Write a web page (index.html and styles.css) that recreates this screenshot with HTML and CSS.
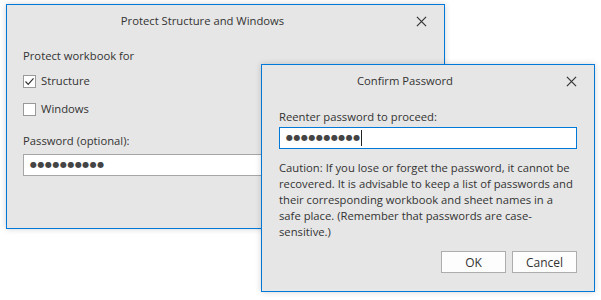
FILE: index.html
```html
<!DOCTYPE html>
<html lang="en">
<head>
    <meta charset="UTF-8">
    <title>Protect Structure and Windows</title>
    <link rel="stylesheet" href="styles.css">
</head>
<body>
    <div class="dialog protect">
        <div class="titlebar">
            <div class="title">Protect Structure and Windows</div>
            <div class="close">
                <svg width="12" height="12" viewBox="0 0 12 12"><path d="M1 1L11 11M11 1L1 11" stroke="#333" stroke-width="1.3" fill="none"/></svg>
            </div>
        </div>
        <div class="body">
            <div class="label">Protect workbook for</div>
            <div class="options">
                <div class="check-row">
                    <span class="checkbox">
                        <svg width="11" height="11" viewBox="0 0 11 11"><path d="M1.5 5.5L4.2 8.3L9.5 2.3" stroke="#333" stroke-width="1.2" fill="none"/></svg>
                    </span>
                    Structure
                </div>
                <div class="check-row">
                    <span class="checkbox"></span>
                    Windows
                </div>
            </div>
            <div class="label pw-label">Password (optional):</div>
            <div class="input"><span class="dots">●●●●●●●●●●</span></div>
        </div>
    </div>

    <div class="dialog confirm">
        <div class="titlebar">
            <div class="title">Confirm Password</div>
            <div class="close">
                <svg width="12" height="12" viewBox="0 0 12 12"><path d="M1 1L11 11M11 1L1 11" stroke="#333" stroke-width="1.3" fill="none"/></svg>
            </div>
        </div>
        <div class="body">
            <div class="label">Reenter password to proceed:</div>
            <div class="input focused"><span class="dots">●●●●●●●●●●</span><span class="caret"></span></div>
            <p class="caution">Caution: If you lose or forget the password, it cannot be recovered. It is advisable to keep a list of passwords and their corresponding workbook and sheet names in a safe place. (Remember that passwords are case-sensitive.)</p>
            <div class="buttons">
                <button class="btn">OK</button>
                <button class="btn">Cancel</button>
            </div>
        </div>
    </div>
</body>
</html>
```

FILE: styles.css
```css
*{
    margin: 0;
    padding: 0;
    box-sizing: border-box;
}
body{
    background-color: #fff;
    font-family: "Segoe UI", "Open Sans", Arial, sans-serif;
    font-size: 11.25px;
    line-height: 16px;
    color: #333;
    position: relative;
    width: 601px;
    height: 300px;
    overflow: hidden;
}
.dialog{
    position: absolute;
    background-color: #e6e6e6;
    border: 1px solid #0078d7;
    box-shadow: 0 0 6px rgba(0, 0, 0, 0.18);
}
.protect{
    left: 6px;
    top: 4px;
    width: 439px;
    height: 225px;
}
.confirm{
    left: 261px;
    top: 64px;
    width: 334px;
    height: 228px;
}
.titlebar{
    display: flex;
    height: 32px;
    align-items: center;
}
.title{
    flex: 1;
    text-align: center;
}
.close{
    width: 46px;
    height: 32px;
    display: flex;
    align-items: center;
    justify-content: center;
}
.close svg{
    width: 11px;
    height: 11px;
}
.protect .body{
    padding: 11px 16px 0 16px;
}
.confirm .body{
    padding: 12px 17px 0 17px;
}
.options{
    margin-top: 3px;
}
.check-row{
    height: 28px;
    display: flex;
    align-items: center;
    gap: 5px;
}
.checkbox{
    width: 13px;
    height: 13px;
    border: 1px solid #999;
    background-color: #fff;
    display: flex;
    align-items: center;
    justify-content: center;
}
.pw-label{
    margin-top: 10px;
}
.input{
    height: 22px;
    border: 1px solid #a6a6a6;
    background-color: #fff;
    display: flex;
    align-items: center;
    padding-left: 6px;
    margin-top: 5px;
}
.input.focused{
    border-color: #0078d7;
    margin-top: 2px;
}
.dots{
    font-family: "DejaVu Sans", sans-serif;
    font-size: 8px;
    letter-spacing: 0.5px;
    color: #444;
}
.caret{
    width: 1px;
    height: 16px;
    background-color: #222;
    margin-left: 0;
}
.caution{
    margin-top: 11px;
}
.buttons{
    display: flex;
    justify-content: flex-end;
    gap: 6px;
    margin-top: 11px;
}
.btn{
    width: 65px;
    height: 22px;
    border: 1px solid #adadad;
    background-color: #fdfdfd;
    font-family: inherit;
    font-size: 12px;
    color: #333;
}
```
